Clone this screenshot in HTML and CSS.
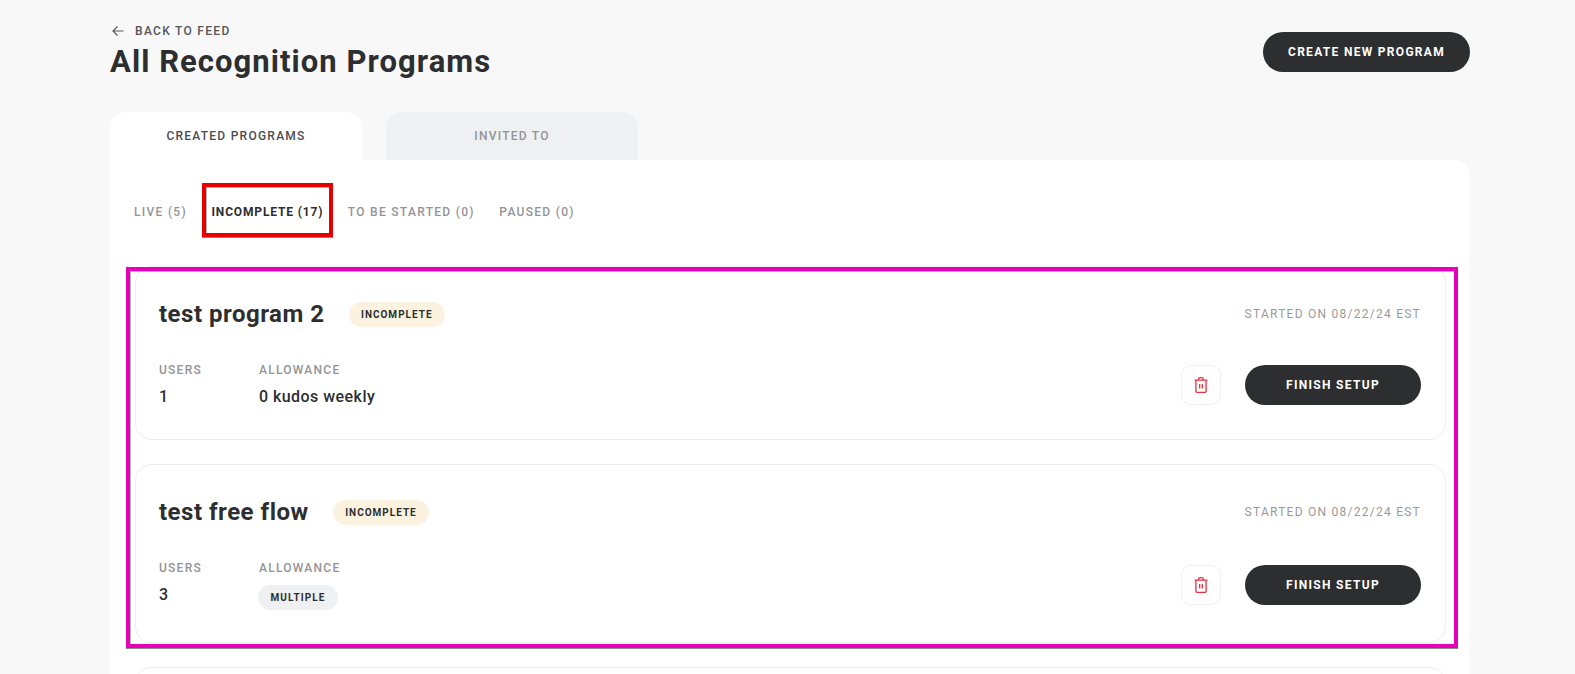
FILE: index.html
```html
<!DOCTYPE html>
<html lang="en">
<head>
<meta charset="utf-8">
<title>All Recognition Programs</title>
<link rel="stylesheet" href="styles.css">
</head>
<body>
<div class="page">
  <header class="header">
    <div class="header-left">
      <a class="back">
        <svg class="back-icon" width="12" height="12" viewBox="0 0 12 12" fill="none"><path d="M11.5 6H1M5.5 1.5 1 6l4.5 4.5" stroke="#5a5a5e" stroke-width="1.2"/></svg>
        <span>BACK TO FEED</span>
      </a>
      <h1 class="title">All Recognition Programs</h1>
    </div>
    <button class="btn btn-create">CREATE NEW PROGRAM</button>
  </header>

  <nav class="tabs">
    <div class="tab tab-active">CREATED PROGRAMS</div>
    <div class="tab tab-muted">INVITED TO</div>
  </nav>

  <main class="panel">
    <div class="subtabs">
      <span class="subtab">LIVE (5)</span>
      <span class="subtab subtab-active">INCOMPLETE (17)</span>
      <span class="subtab">TO BE STARTED (0)</span>
      <span class="subtab">PAUSED (0)</span>
    </div>

    <article class="card">
      <div class="card-top">
        <h2 class="card-title">test program 2</h2>
        <span class="badge">INCOMPLETE</span>
        <span class="started">STARTED ON 08/22/24 EST</span>
      </div>
      <div class="card-body">
        <div class="col col-users">
          <div class="label">USERS</div>
          <div class="value">1</div>
        </div>
        <div class="col">
          <div class="label">ALLOWANCE</div>
          <div class="value">0 kudos weekly</div>
        </div>
        <button class="icon-btn" aria-label="Delete">
          <svg width="14" height="16" viewBox="0 0 14 16" fill="none" stroke="#e7303e" stroke-width="1.3"><path d="M.6 3.2h12.8M1.9 3.2v10.9a1.2 1.2 0 0 0 1.2 1.2h7.8a1.2 1.2 0 0 0 1.2-1.2V3.2M4.7 3.2V1.9A1.2 1.2 0 0 1 5.9.7h2.2a1.2 1.2 0 0 1 1.2 1.2v1.3M5.7 7v4.6M8.3 7v4.6"/></svg>
        </button>
        <button class="btn btn-finish">FINISH SETUP</button>
      </div>
    </article>

    <article class="card card-pill">
      <div class="card-top">
        <h2 class="card-title">test free flow</h2>
        <span class="badge">INCOMPLETE</span>
        <span class="started">STARTED ON 08/22/24 EST</span>
      </div>
      <div class="card-body">
        <div class="col col-users">
          <div class="label">USERS</div>
          <div class="value">3</div>
        </div>
        <div class="col">
          <div class="label">ALLOWANCE</div>
          <span class="pill">MULTIPLE</span>
        </div>
        <button class="icon-btn" aria-label="Delete">
          <svg width="14" height="16" viewBox="0 0 14 16" fill="none" stroke="#e7303e" stroke-width="1.3"><path d="M.6 3.2h12.8M1.9 3.2v10.9a1.2 1.2 0 0 0 1.2 1.2h7.8a1.2 1.2 0 0 0 1.2-1.2V3.2M4.7 3.2V1.9A1.2 1.2 0 0 1 5.9.7h2.2a1.2 1.2 0 0 1 1.2 1.2v1.3M5.7 7v4.6M8.3 7v4.6"/></svg>
        </button>
        <button class="btn btn-finish">FINISH SETUP</button>
      </div>
    </article>

    <article class="card card-empty"></article>
  </main>

  <div class="mark mark-red"></div>
  <div class="mark mark-magenta"></div>
</div>
</body>
</html>
```
FILE: styles.css
```css
html, body {
  margin: 0;
  height: 100%;
  overflow: hidden;
}
body {
  background: #f8f8f8;
  color: #2d2e30;
  font-family: Roboto, "Liberation Sans", sans-serif;
}
.page {
  position: relative;
  padding: 0 105px 0 110px;
}
.header {
  display: flex;
  justify-content: space-between;
  align-items: flex-start;
  height: 112px;
  box-sizing: border-box;
  padding-top: 23px;
}
.back {
  display: flex;
  align-items: center;
  gap: 11px;
  height: 16px;
  padding-left: 2px;
  font-size: 12px;
  font-weight: 500;
  letter-spacing: 1.3px;
  color: #56565a;
}
.title {
  margin: 5px 0 0;
  font-size: 31px;
  line-height: 36px;
  font-weight: 700;
  letter-spacing: 1.05px;
}
.btn {
  border: 0;
  font-family: inherit;
  font-size: 12px;
  font-weight: 700;
  letter-spacing: 1.3px;
  color: #fff;
  background: #2d2e30;
  height: 40px;
  border-radius: 20px;
  padding: 0;
}
.btn-create {
  width: 207px;
  margin-top: 9px;
}
.tabs {
  display: flex;
  gap: 24px;
}
.tab {
  width: 252px;
  height: 48px;
  display: flex;
  align-items: center;
  justify-content: center;
  border-radius: 16px 16px 0 0;
  font-size: 12px;
  font-weight: 500;
  letter-spacing: 1.25px;
  box-sizing: border-box;
}
.tab-active {
  background: #fff;
  color: #4d4d50;
}
.tab-muted {
  background: #eff0f2;
  color: #949497;
}
.panel {
  background: #fff;
  border-radius: 0 16px 0 0;
  padding: 44px 24px 40px 25px;
}
.subtabs {
  display: flex;
  gap: 24.5px;
  height: 16px;
  margin: 0 0 46px -1px;
}
.subtab {
  font-size: 12px;
  line-height: 16px;
  font-weight: 500;
  letter-spacing: 1.3px;
  color: #949497;
}
.subtab-active {
  font-weight: 700;
  letter-spacing: 0.85px;
  color: #2d2e30;
}
.card {
  border: 1px solid #eeeeef;
  border-radius: 16px;
  padding: 31px 24px 31px 23px;
  margin-bottom: 24px;
}
.card-pill {
  padding-bottom: 32px;
}
.card-empty {
  height: 120px;
}
.card-top {
  display: flex;
  align-items: center;
  height: 32px;
}
.card-title {
  margin: 0;
  font-size: 24px;
  line-height: 32px;
  font-weight: 700;
  letter-spacing: 0.5px;
}
.badge {
  margin-left: 24.5px;
  display: inline-flex;
  align-items: center;
  height: 25px;
  padding: 0 12px;
  border-radius: 13px;
  background: #fbf3df;
  font-size: 10px;
  font-weight: 700;
  letter-spacing: 1px;
}
.started {
  margin-left: auto;
  font-size: 12px;
  letter-spacing: 1.25px;
  color: #9a9a9c;
}
.card-body {
  display: flex;
  align-items: center;
  margin-top: 32px;
}
.col-users {
  width: 100px;
}
.col {
  align-self: flex-start;
}
.label {
  font-size: 12px;
  line-height: 16px;
  font-weight: 500;
  letter-spacing: 1.25px;
  color: #949497;
}
.value {
  margin-top: 8px;
  font-size: 16px;
  line-height: 22px;
  font-weight: 500;
  letter-spacing: 0.45px;
}
.pill {
  display: flex;
  align-items: center;
  justify-content: center;
  width: 80px;
  height: 25px;
  margin-top: 9px;
  margin-left: -1px;
  border-radius: 13px;
  background: #eff0f2;
  font-size: 10px;
  font-weight: 700;
  letter-spacing: 1.1px;
}
.icon-btn {
  margin-left: auto;
  width: 40px;
  height: 40px;
  display: flex;
  align-items: center;
  justify-content: center;
  padding: 0;
  background: #fff;
  border: 1px solid #f0f0f1;
  border-radius: 10px;
}
.btn-finish {
  width: 176px;
  margin-left: 24px;
}
.mark {
  position: absolute;
  box-sizing: border-box;
  pointer-events: none;
  box-shadow: inset 1px 1px 0 rgba(90, 90, 90, 0.45), 0 1px 0 rgba(90, 90, 90, 0.7);
}
.mark-red {
  left: 202px;
  top: 183px;
  width: 131px;
  height: 54px;
  border: 4px solid #e60000;
}
.mark-magenta {
  left: 126px;
  top: 267px;
  width: 1332px;
  height: 381px;
  border: 4px solid #e600b8;
}
```
